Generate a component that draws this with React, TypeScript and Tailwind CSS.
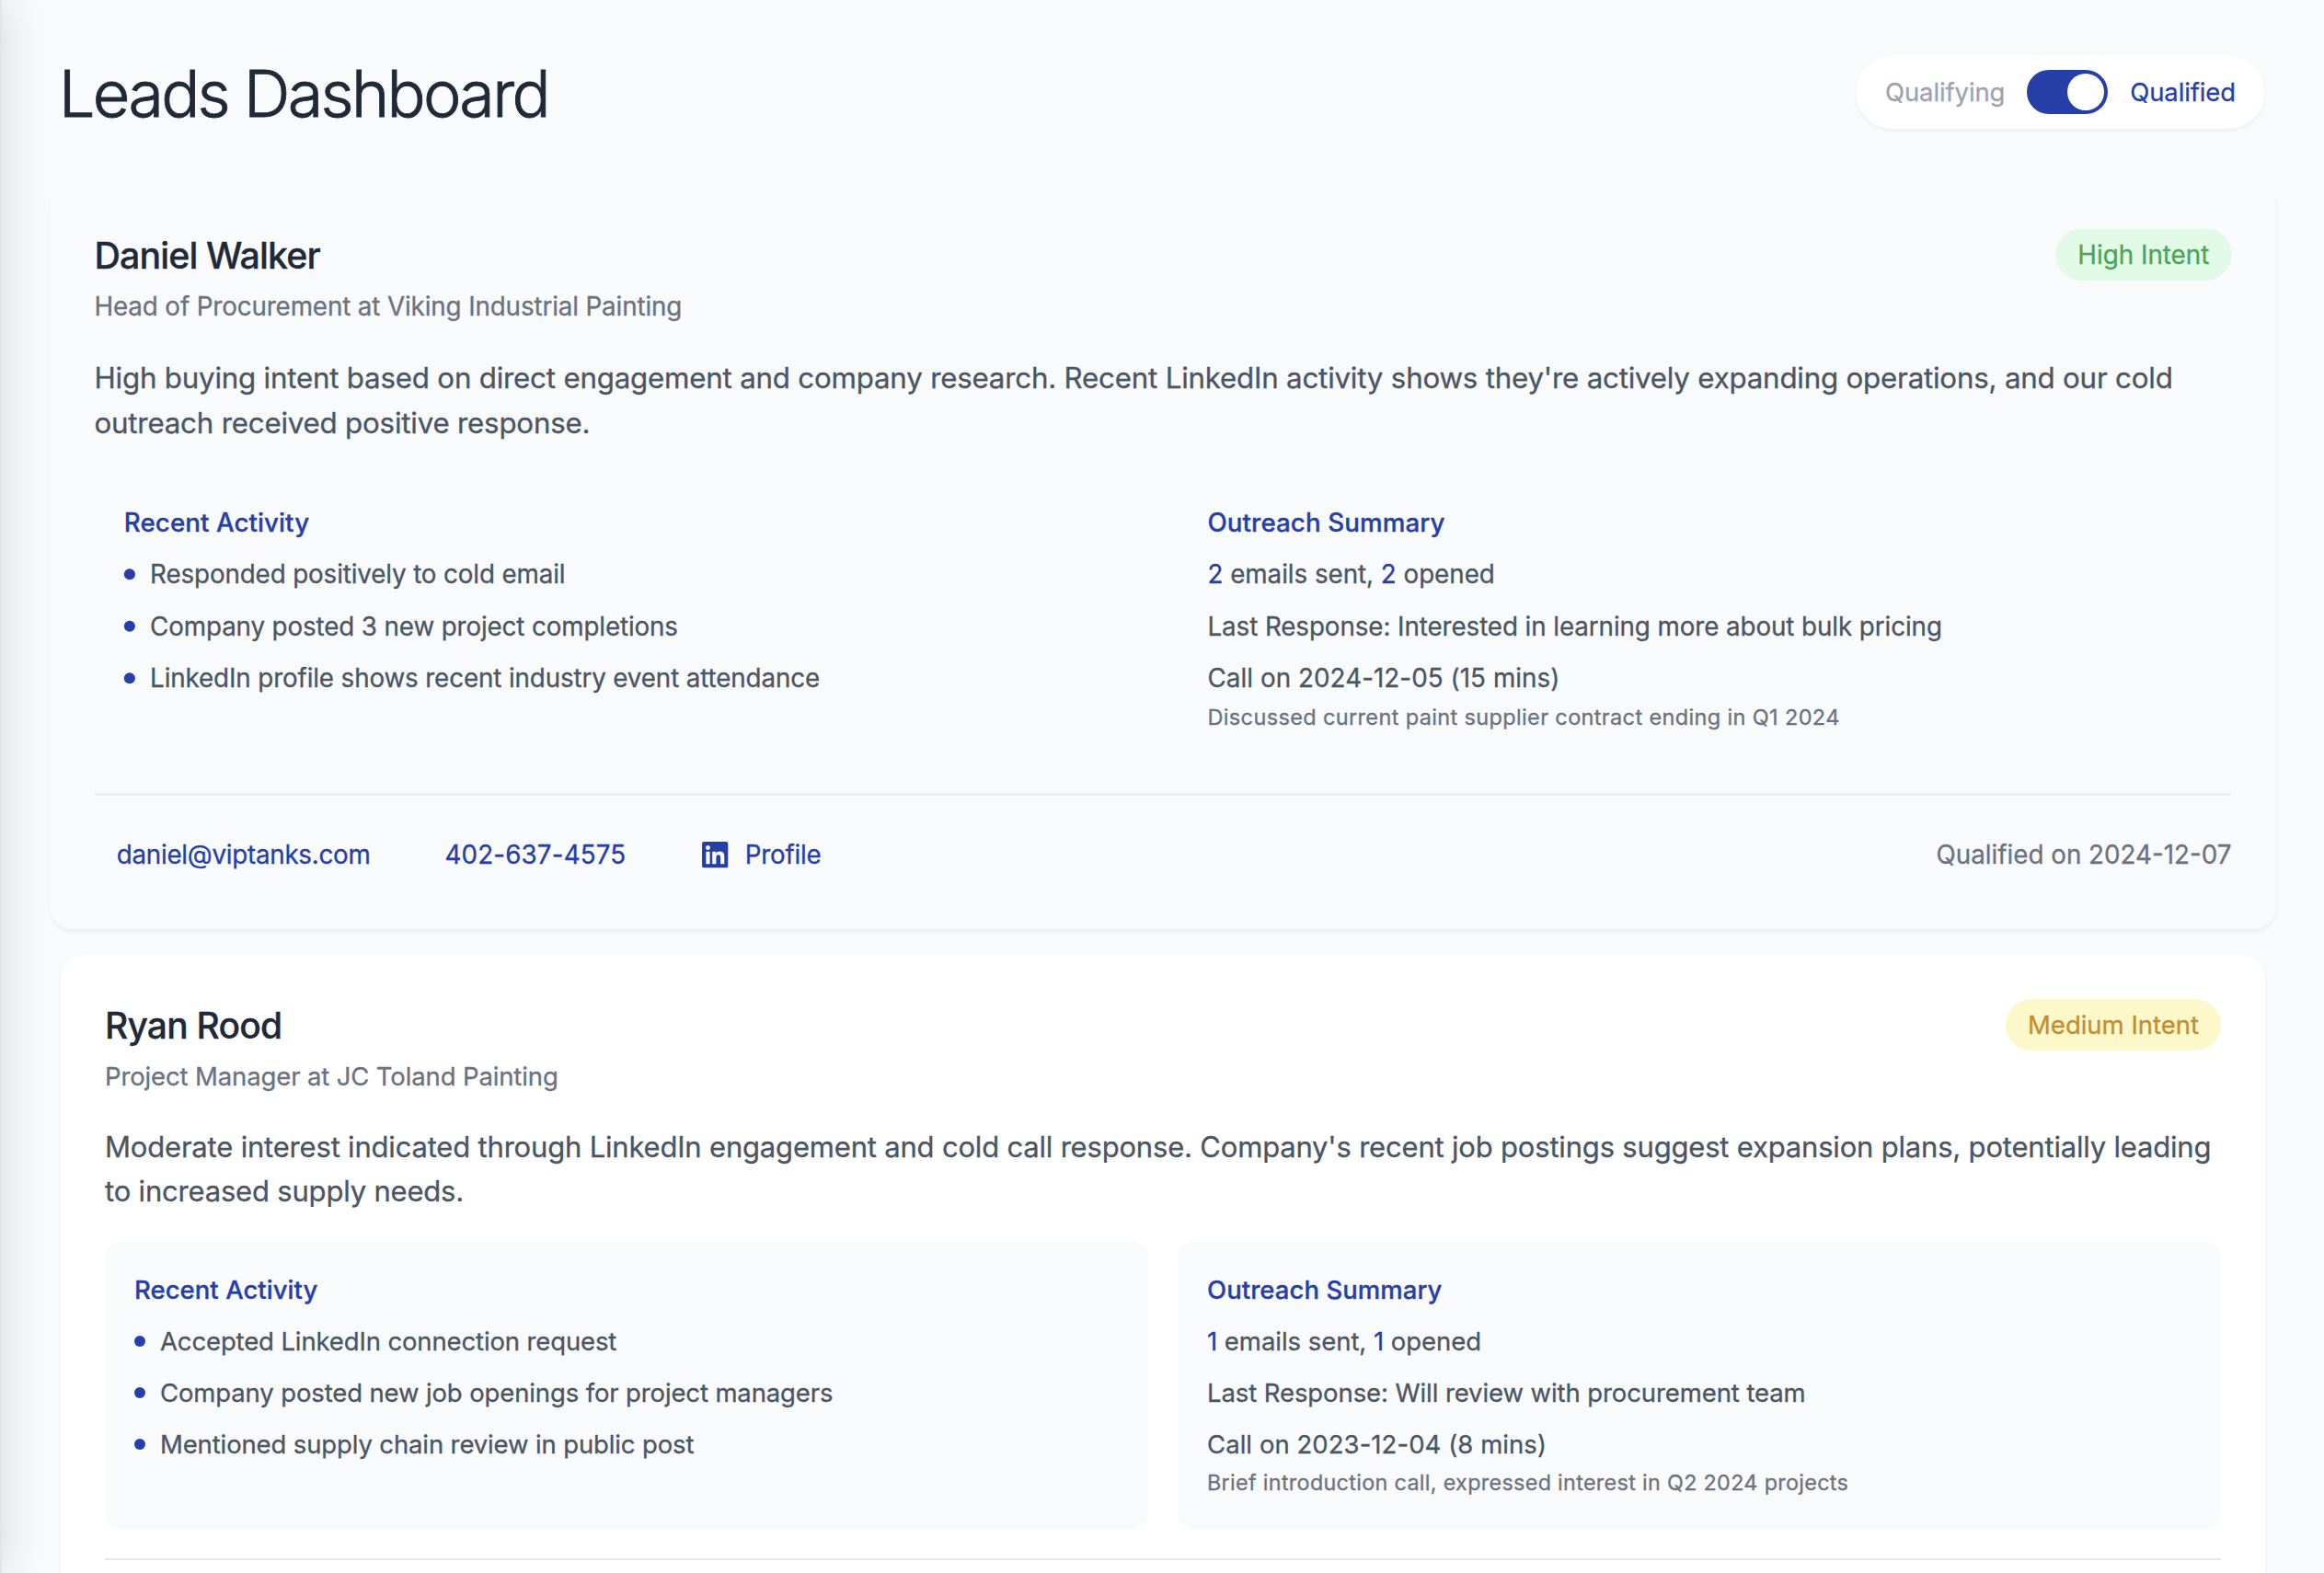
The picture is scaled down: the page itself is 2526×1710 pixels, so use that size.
import { FaLinkedin } from "react-icons/fa";

type Contact = { email: string; phone: string; qualified: string };

type Lead = {
  name: string;
  nameClass: string;
  role: string;
  intent: "High Intent" | "Medium Intent";
  summary: string;
  summaryClass: string;
  activity: string[];
  emails: number;
  opened: number;
  response: string;
  call: string;
  note: string;
  contact?: Contact;
  raised?: boolean;
};

const leads: Lead[] = [
  {
    name: "Daniel Walker",
    nameClass: "tracking-[-0.9px]",
    role: "Head of Procurement at Viking Industrial Painting",
    intent: "High Intent",
    summary:
      "High buying intent based on direct engagement and company research. Recent LinkedIn activity shows they're actively expanding operations, and our cold outreach received positive response.",
    summaryClass: "tracking-[-0.22px]",
    activity: [
      "Responded positively to cold email",
      "Company posted 3 new project completions",
      "LinkedIn profile shows recent industry event attendance",
    ],
    emails: 2,
    opened: 2,
    response: "Interested in learning more about bulk pricing",
    call: "Call on 2024-12-05 (15 mins)",
    note: "Discussed current paint supplier contract ending in Q1 2024",
    contact: {
      email: "daniel@viptanks.com",
      phone: "402-637-4575",
      qualified: "2024-12-07",
    },
    raised: true,
  },
  {
    name: "Ryan Rood",
    nameClass: "tracking-[-0.8px]",
    role: "Project Manager at JC Toland Painting",
    intent: "Medium Intent",
    summary:
      "Moderate interest indicated through LinkedIn engagement and cold call response. Company's recent job postings suggest expansion plans, potentially leading to increased supply needs.",
    summaryClass: "tracking-[-0.19px]",
    activity: [
      "Accepted LinkedIn connection request",
      "Company posted new job openings for project managers",
      "Mentioned supply chain review in public post",
    ],
    emails: 1,
    opened: 1,
    response: "Will review with procurement team",
    call: "Call on 2023-12-04 (8 mins)",
    note: "Brief introduction call, expressed interest in Q2 2024 projects",
  },
];

const badgeColors = {
  "High Intent": "bg-[#e1f9e7] text-[#4da459]",
  "Medium Intent": "bg-[#fdf8ca] text-[#c28e30]",
};

function ModeToggle() {
  return (
    <div className="flex items-center gap-6 rounded-full bg-white px-8 py-4 tracking-[-0.12px] shadow-[0_2px_4px_0_rgb(0_0_0/0.05)]">
      <span className="text-[#9ca3af]">Qualifying</span>
      <button className="flex h-12 w-[88px] items-center justify-end rounded-full bg-[#263fa8] p-1">
        <span className="size-10 rounded-full bg-white" />
      </button>
      <span className="text-[#263fa8]">Qualified</span>
    </div>
  );
}

function LeadCard({ lead }: { lead: Lead }) {
  const panel = `rounded-2xl p-8 ${lead.raised ? "" : "bg-[#f9fafc]"}`;
  return (
    <article
      className={`rounded-3xl p-12 shadow-[0_2px_4px_0_rgb(0_0_0/0.05)] ${
        lead.raised ? "scale-[1.01] bg-[#f9fafc]" : "bg-white"
      }`}
    >
      <div className="flex items-start justify-between">
        <div>
          <h2 className={`text-[39px] leading-[57px] font-medium text-[#1f2937] ${lead.nameClass}`}>
            {lead.name}
          </h2>
          <p className="mt-[7px] tracking-[-0.13px] text-[#6b7280]">{lead.role}</p>
        </div>
        <span className={`rounded-full px-6 py-2 tracking-[-0.01px] ${badgeColors[lead.intent]}`}>
          {lead.intent}
        </span>
      </div>

      <p className={`mt-[33px] text-[31px] leading-[48px] text-[#4b5563] ${lead.summaryClass}`}>
        {lead.summary}
      </p>

      <div className="mt-[31px] grid grid-cols-2 gap-8">
        <section className={panel}>
          <h3 className="font-medium tracking-[0.04px] text-[#263fa8]">Recent Activity</h3>
          <ul className="mt-4 flex flex-col gap-4 tracking-[-0.13px] text-[#4b5563]">
            {lead.activity.map((item) => (
              <li key={item} className="flex items-center gap-4">
                <span className="size-3 rounded-full bg-[#263fa8]" />
                {item}
              </li>
            ))}
          </ul>
        </section>
        <section className={panel}>
          <h3 className="font-medium tracking-[0.06px] text-[#263fa8]">Outreach Summary</h3>
          <div className="mt-4 flex flex-col gap-4 text-[#4b5563]">
            <p className="tracking-[-0.04px]">
              <span className="text-[#263fa8]">{lead.emails}</span> emails sent,{" "}
              <span className="text-[#263fa8]">{lead.opened}</span> opened
            </p>
            <p className="tracking-[-0.09px]">Last Response: {lead.response}</p>
            <div>
              <p className="tracking-[0.06px]">{lead.call}</p>
              <p className="-mb-[3px] text-[23.3px] leading-[43px] tracking-[0.34px] text-[#6b7280]">
                {lead.note}
              </p>
            </div>
          </div>
        </section>
      </div>

      <footer className="mt-8 flex min-h-[98px] items-center justify-between border-t-2 border-[#e5e7eb] pt-8">
        {lead.contact && (
          <>
            <div className="flex gap-8 text-[#263fa8]">
              <a className="px-6 py-3 tracking-[-0.26px]">{lead.contact.email}</a>
              <a className="px-6 py-3 tracking-[0.15px]">{lead.contact.phone}</a>
              <a className="flex items-center gap-4 px-6 py-3 tracking-[-0.2px]">
                <FaLinkedin className="size-8" />
                Profile
              </a>
            </div>
            <span className="text-[#6b7280]">Qualified on {lead.contact.qualified}</span>
          </>
        )}
      </footer>
    </article>
  );
}

export default function App() {
  return (
    <div className="flex h-screen overflow-hidden bg-[#f9fafc] font-['Inter',sans-serif] text-[27.5px] leading-[40px] [-webkit-text-stroke:0.3px_currentColor]">
      <aside className="-ml-[400px] w-[402px] shrink-0 border-r-2 border-[#e2e4ea] bg-white shadow-[0_0_48px_0_rgb(0_0_0/0.15)]" />
      <main className="min-w-0 flex-1 px-16 py-[60px]">
        <header className="flex h-20 items-center justify-between">
          <h1 className="mt-0.5 -mb-0.5 -ml-0.5 text-[70px] leading-[80px] font-light tracking-[-2.69px] text-[#1f2937] [-webkit-text-stroke:0.9px_currentColor]">
            Leads Dashboard
          </h1>
          <ModeToggle />
        </header>
        <div className="mt-16 flex flex-col gap-8">
          {leads.map((lead) => (
            <LeadCard key={lead.name} lead={lead} />
          ))}
        </div>
      </main>
    </div>
  );
}
